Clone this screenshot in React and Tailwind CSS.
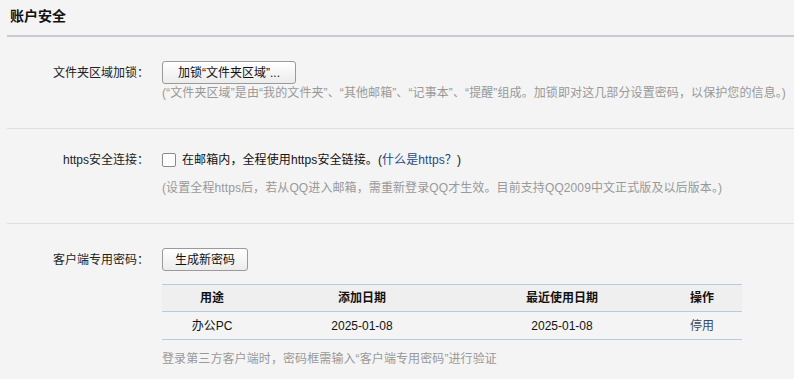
const font = "font-['Liberation_Sans','Noto_Sans_CJK_SC',sans-serif]"

function Label({ children }) {
  return <div className="w-[142px] shrink-0 text-right text-[12px] text-[#222]">{children}</div>
}

function Btn({ children, className = '' }) {
  return (
    <button
      className={`rounded-[3px] border border-[#9a9a9a] bg-gradient-to-b from-white to-[#ececec] text-[12px] text-[#111] ${className}`}
    >
      {children}
    </button>
  )
}

const rows = [{ use: '办公PC', added: '2025-01-08', last: '2025-01-08' }]

export default function App() {
  return (
    <div className={`min-h-screen bg-[#f4f4f4] ${font}`}>
      <div className="ml-[7px] flex h-[37px] items-center border-b-2 border-[#c9ccd3] pb-[2px] pl-[3px]">
        <h2 className="text-[14px] font-bold text-[#111]">账户安全</h2>
      </div>

      {/* folder lock */}
      <section className="ml-[7px] h-[92px] border-b border-[#e0e0e0] pt-[24px]">
        <div className="flex items-center">
          <Label>文件夹区域加锁：</Label>
          <Btn className="ml-[13px] h-[23px] w-[134px]">加锁“文件夹区域”...</Btn>
        </div>
        <p className="ml-[155px] mt-[1px] text-[12px] leading-[16px] tracking-[0.1px] text-[#999]">
          (“文件夹区域”是由“我的文件夹”、“其他邮箱”、“记事本”、“提醒”组成。加锁即对这几部分设置密码，以保护您的信息。)
        </p>
      </section>

      {/* https */}
      <section className="ml-[7px] h-[95px] border-b border-[#e0e0e0] pt-[21px]">
        <div className="flex h-[20px] items-center">
          <Label>https安全连接：</Label>
          <label className="ml-[13px] flex items-center text-[12px] text-[#111]">
            <span className="h-[14px] w-[14px] rounded-[2px] border-[1.5px] border-[#8a8a8e] bg-white" />
            <span className="ml-[6px] tracking-[0.1px]">
              在邮箱内，全程使用https安全链接。(
              <a className="text-[#1d4a88]">什么是https？</a>)
            </span>
          </label>
        </div>
        <p className="ml-[155px] mt-[8px] text-[12px] leading-[20px] tracking-[0.1px] text-[#999]">
          (设置全程https后，若从QQ进入邮箱，需重新登录QQ才生效。目前支持QQ2009中文正式版及以后版本。)
        </p>
      </section>

      {/* client password */}
      <section className="ml-[7px] pt-[24px]">
        <div className="flex items-center">
          <Label>客户端专用密码：</Label>
          <Btn className="ml-[13px] h-[23px] w-[86px]">生成新密码</Btn>
        </div>
        <table className="ml-[155px] mt-[13px] w-[580px] border-collapse text-[12px] text-[#111]">
          <thead>
            <tr className="h-[27px] border-y border-[#b9cbe2] bg-[#efefef] font-bold">
              <th className="w-[100px]">用途</th>
              <th className="w-[200px]">添加日期</th>
              <th className="w-[200px]">最近使用日期</th>
              <th className="w-[80px]">操作</th>
            </tr>
          </thead>
          <tbody>
            {rows.map(r => (
              <tr key={r.use} className="h-[28px] border-b border-[#b9cbe2] text-center">
                <td>{r.use}</td>
                <td>{r.added}</td>
                <td>{r.last}</td>
                <td><a className="text-[#3a4a5e]">停用</a></td>
              </tr>
            ))}
          </tbody>
        </table>
        <p className="ml-[155px] mt-[11px] text-[12px] leading-[16px] tracking-[0.1px] text-[#999]">
          登录第三方客户端时，密码框需输入“客户端专用密码”进行验证
        </p>
      </section>
    </div>
  )
}
